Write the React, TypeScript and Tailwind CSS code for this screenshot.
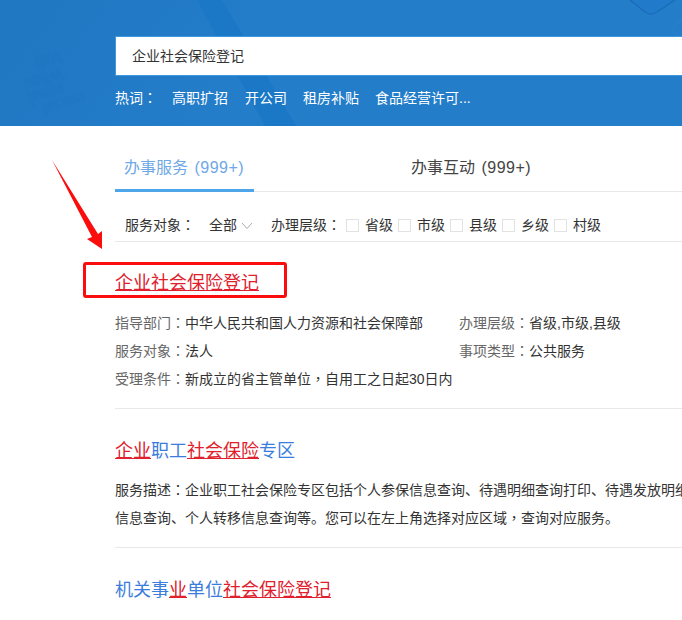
import React from "react";

const FONT = '"Liberation Sans", "Noto Sans CJK SC", sans-serif';

// Fullwidth colon and comma sit centred in their cell, as the Traditional glyphs do.
function P({ c }: { c: string }) {
  return <span className="leading-none" style={{ fontFamily: '"Noto Sans CJK TC", sans-serif' }}>{c}</span>;
}

function Hit({ children }: { children: React.ReactNode }) {
  return <span className="text-[#e0202c] underline underline-offset-[1px]">{children}</span>;
}

function Level({ label }: { label: string }) {
  return (
    <label className="flex items-center">
      <span className="w-[13px] h-[13px] border border-[#e2e2e2] bg-white" />
      <span className="ml-[6px] w-[33px] text-[#333]">{label}</span>
    </label>
  );
}

function BannerArt() {
  return (
    <svg className="absolute inset-0" width="682" height="126" viewBox="0 0 682 126">
      <defs>
        <linearGradient id="shade" x1="0" y1="0.2" x2="1" y2="0.6">
          <stop offset="0" stopColor="#1a6fb8" stopOpacity="0.4" />
          <stop offset="1" stopColor="#1a6fb8" stopOpacity="0" />
        </linearGradient>
        <filter id="soft"><feGaussianBlur stdDeviation="0.8" /></filter>
      </defs>
      <rect x="0" y="0" width="240" height="126" fill="url(#shade)" />
      <polygon points="197,0 222,0 296,126 265,126" fill="#1a78c6" />
      <g fill="#155f9f" fontSize="17" opacity="0.2" fontFamily="Liberation Serif, serif" filter="url(#soft)">
        <text transform="translate(60 50) rotate(163)">Vali</text>
        <text transform="translate(62 68) rotate(163)">Wheu</text>
        <text transform="translate(62 84) rotate(163)">enual</text>
        <text transform="translate(84 92) rotate(163)">enicial</text>
      </g>
      <path d="M630 0 L645 12 Q651 16 657 12 L675 0" fill="#217aca" stroke="#1b6db8" strokeWidth="1.5" />
      <path d="M682 20 Q664 30 682 38" fill="none" stroke="#2c84cf" strokeWidth="1" />
    </svg>
  );
}

export default function App() {
  return (
    <div className="relative w-[682px] h-[620px] overflow-hidden bg-white text-[14px] text-[#333]" style={{ fontFamily: FONT }}>
      <header className="relative h-[126px] bg-[#247dc9] pl-[115px] pt-[36px]">
        <BannerArt />
        <div className="relative w-[700px] h-[40px] bg-white border border-[#3f97e0] pl-[16px] flex items-center text-[#333]">
          企业社会保险登记
        </div>
        <div className="relative mt-[12px] flex items-center text-white leading-[20px]">
          <span className="w-[57px]">热词<P c="：" /></span>
          <span className="mr-[17px]">高职扩招</span>
          <span className="mr-[16px]">开公司</span>
          <span className="mr-[16px]">租房补贴</span>
          <span>食品经营许可...</span>
        </div>
      </header>

      <main className="pl-[115px] w-[900px]">
        <nav className="flex h-[66px] border-b border-[#e8e8e8] text-[16px]">
          <div className="w-[139px] mb-[-1px] pt-[30px] pl-[9px] border-b-[3px] border-[#4ea6ea] text-[#6fa8e6] leading-[24px]">
            办事服务 <span className="ml-[2px] tracking-[0.5px]">(999+)</span>
          </div>
          <div className="ml-[157px] pt-[30px] leading-[24px] text-[#444]">
            办事互动 <span className="ml-[2px] tracking-[0.5px]">(999+)</span>
          </div>
        </nav>

        <div className="flex items-center h-[50px] pt-[18px] pl-[10px] border-b border-[#e8e8e8]">
          <span className="w-[84px]">服务对象<P c="：" /></span>
          <span>全部</span>
          <svg className="ml-[4px] mr-[18px]" width="12" height="8" viewBox="0 0 12 8">
            <path d="M1 1 L6 6.5 L11 1" fill="none" stroke="#aaa" strokeWidth="1" />
          </svg>
          <span className="w-[75px]">办理层级<P c="：" /></span>
          <Level label="省级" />
          <Level label="市级" />
          <Level label="县级" />
          <Level label="乡级" />
          <Level label="村级" />
        </div>

        <h3 className="mt-[28px] text-[18px] leading-[26px]">
          <Hit>企业社会保险登记</Hit>
        </h3>
        <div className="mt-[13px] grid grid-cols-[344px_1fr] leading-[28px]">
          <p><span className="text-[#666]">指导部门<P c="：" /></span>中华人民共和国人力资源和社会保障部</p>
          <p><span className="text-[#666]">办理层级<P c="：" /></span>省级,市级,县级</p>
          <p><span className="text-[#666]">服务对象<P c="：" /></span>法人</p>
          <p><span className="text-[#666]">事项类型<P c="：" /></span>公共服务</p>
          <p className="col-span-2"><span className="text-[#666]">受理条件<P c="：" /></span>新成立的省主管单位<P c="，" />自用工之日起30日内</p>
        </div>

        <hr className="mt-[15px] border-[#e8e8e8]" />

        <h3 className="mt-[29px] text-[18px] leading-[26px] text-[#3b7ddd]">
          <Hit>企业</Hit>职工<Hit>社会保险</Hit>专区
        </h3>
        <div className="mt-[12px] leading-[28px] whitespace-nowrap">
          <p>服务描述<P c="：" />企业职工社会保险专区包括个人参保信息查询、待遇明细查询打印、待遇发放明细查询</p>
          <p>信息查询、个人转移信息查询等。您可以在左上角选择对应区域<P c="，" />查询对应服务。</p>
        </div>

        <hr className="mt-[15px] border-[#e8e8e8]" />

        <h3 className="mt-[29px] text-[18px] leading-[26px] text-[#3b7ddd]">
          机关事<Hit>业</Hit>单位<Hit>社会保险登记</Hit>
        </h3>
      </main>

      {/* Red callout drawn on top of the results */}
      <div className="absolute left-[83px] top-[262px] w-[204px] h-[36px] border-[3px] border-[#fb0d0d] rounded-[3px]" />
      <svg className="absolute left-0 top-0" width="120" height="260" viewBox="0 0 120 260">
        <polygon points="52,160 98,234 102,231 102,249 87,239 92,237" fill="#fb0d0d" />
      </svg>
    </div>
  );
}
